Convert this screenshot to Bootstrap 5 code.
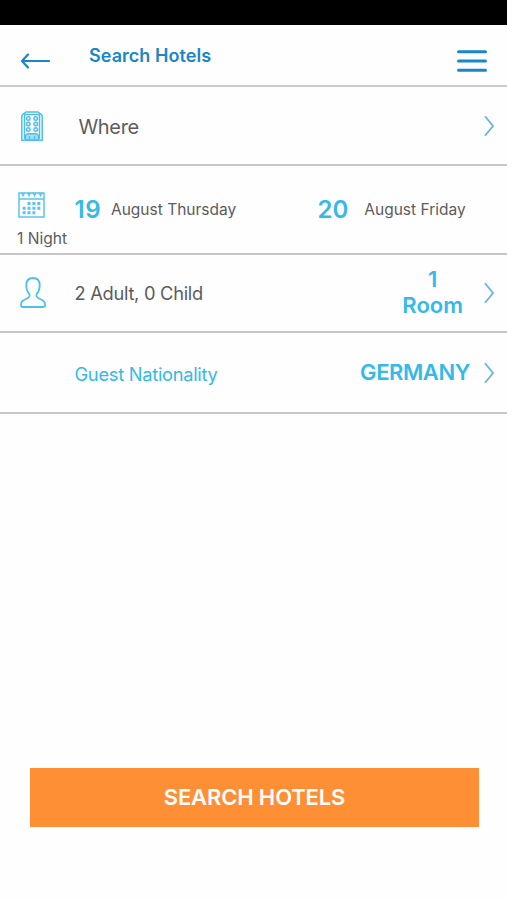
<!DOCTYPE html>
<html lang="en">
<head>
<meta charset="utf-8">
<meta name="viewport" content="width=device-width, initial-scale=1">
<title>Search Hotels</title>
<link href="https://cdn.jsdelivr.net/npm/bootstrap@5.3.0/dist/css/bootstrap.min.css" rel="stylesheet">
<style>
body{font-family:Inter,"Liberation Sans",sans-serif;color:#5c5c5c;background:#fefefe;line-height:1}
.screen{height:900px;overflow:hidden}
.statusbar{height:25px;background:#000}
.topbar{height:62px;border-bottom:2px solid #cbcbcb;padding:0 20px;color:#1a86c7}
.title{font-size:18px;font-weight:600;letter-spacing:.05px;margin-left:39px;padding-top:2px}
.line{border-bottom:2px solid #c6c6c6;padding:0 12px 0 17px}
.where{height:79px}
.dates{height:89px;display:grid;grid-template-columns:57.5px 243px 1fr;grid-template-rows:47px 17px;padding-top:18px;align-content:start}
.guests{height:78px}.nation{height:81px}
.slot{width:57.5px}
.sky{color:#35b9e9}
.big{font-size:20px;letter-spacing:-.35px;padding-top:2px}
.date{padding-top:4px}
.day{font-size:24px;font-weight:600}
.wide{letter-spacing:.5px}
.dt{font-size:15.500px}
.night{font-size:15.600px}
.mid{font-size:18.300px;letter-spacing:-.28px}
.strong{font-size:22px;line-height:26px;font-weight:600}
.country{letter-spacing:-.42px;padding-bottom:2px}
.cta{height:59px;background:#ff8f35;color:#fff;border:0;border-radius:0;font-size:22px;font-weight:600;letter-spacing:-.15px;margin:0 28px 73px 30px;padding:0}
svg{display:block;fill:none;flex:none}
</style>
<script src="https://cdn.jsdelivr.net/npm/bootstrap@5.3.0/dist/js/bootstrap.bundle.min.js" defer></script>
</head>
<body>
<main class="screen d-flex flex-column">
<div class="statusbar"></div>
<header class="topbar d-flex align-items-center">
<svg class="mt-2 pt-1" width="30" height="22" viewBox="0 0 30 18" stroke="currentColor" stroke-width="2.200" stroke-linecap="round" stroke-linejoin="round"><path d="M8 2.500 2 9 8 15.500M2.500 9H29"/></svg>
<h1 class="title mb-0">Search Hotels</h1>
<svg class="ms-auto mt-2 pt-1" width="30" height="28" viewBox="0 0 30 24" stroke="currentColor" stroke-width="3" stroke-linecap="round"><path d="M1.500 2.700H28.500M1.500 12H28.500M1.500 21.300H28.500"/></svg>
</header>
<section class="line where d-flex align-items-center">
<div class="slot"><svg class="ms-1" width="22" height="30" viewBox="0 0 22 30" stroke="#4dbfe9" stroke-width="1.500"><path d="M.8 29.200V5.500Q.8 3.500 2.500 3L5 .9H17L19.500 3Q21.200 3.500 21.200 5.500V29.200ZM3.500 28V4.800Q3.500 3.600 5 3.600H17Q18.500 3.600 18.500 4.800V28"/><path fill="#a6def4" d="M4.500 29V24.500L6.500 22.800H15.500L17.500 24.500V29Z"/><path d="M8.500 29V25M13.500 29V25"/><g stroke-width="1.400"><circle cx="7.300" cy="7.500" r="1.800"/><circle cx="14.700" cy="7.500" r="1.800"/><circle cx="7.300" cy="13" r="1.800"/><circle cx="14.700" cy="13" r="1.800"/><circle cx="7.300" cy="18.500" r="1.800"/><circle cx="14.700" cy="18.500" r="1.800"/></g></svg></div>
<span class="big ms-1">Where</span>
<svg class="ms-auto" width="12" height="22" viewBox="0 0 12 22" stroke="#69b2df" stroke-width="1.800"><path d="M2 1.200 10 11 2 20.800"/></svg>
</section>
<section class="line dates">
<svg style="margin-left:1px;margin-top:7px" width="27" height="28" viewBox="0 0 27 28" stroke="#5bc4ed" stroke-width="1.500"><path d="M1 2H26V26H1ZM1 8H26"/><path d="M3.500 1.500 5 4.500 6.500 1.500M9.500 1.500 11 4.500 12.500 1.500M15 1.500 16.500 4.500 18 1.500M21 1.500 22.500 4.500 24 1.500"/><path stroke-width="3" stroke-dasharray="3 1.900" d="M9.500 12.500H22.300M4.600 17.200H22.300M4.600 21.800H17.300"/></svg>
<div class="date d-flex align-items-center"><span class="day wide sky">19</span><span class="dt" style="margin-left:10px">August Thursday</span></div>
<div class="date d-flex align-items-center"><span class="day sky">20</span><span class="dt ms-3">August Friday</span></div>
<span class="night text-nowrap">1 Night</span>
</section>
<section class="line guests d-flex align-items-center">
<div class="slot"><svg style="margin:-2px 0 0 3px" width="26" height="31" viewBox="0 0 26 31" stroke="#4dc0ec" stroke-width="1.800" stroke-linejoin="round"><path d="M13 1C8.500 1 6.300 4 6.300 8.300C6.300 12 7.500 15 9.300 17C10.500 19.500 9.200 20.500 6.500 21.800C2.500 23.700 1 24.500 1 27.500V28.500Q1 30 2.500 30H23.500Q25 30 25 28.500V27.500C25 24.500 23.500 23.700 19.500 21.800C16.800 20.500 15.500 19.500 16.700 17C18.500 15 19.700 12 19.700 8.300C19.700 4 17.500 1 13 1Z"/></svg></div>
<span class="mid">2 Adult, 0 Child</span>
<span class="strong sky text-center ms-auto" style="padding-bottom:2px">1<br>Room</span>
<svg style="margin-left:20px" width="12" height="22" viewBox="0 0 12 22" stroke="#69b2df" stroke-width="1.800"><path d="M2 1.200 10 11 2 20.800"/></svg>
</section>
<section class="line nation d-flex align-items-center">
<div class="slot"></div>
<span class="mid sky" style="padding-top:3px">Guest Nationality</span>
<span class="strong country sky ms-auto">GERMANY</span>
<svg style="margin-left:13px" width="12" height="22" viewBox="0 0 12 22" stroke="#69b2df" stroke-width="1.800"><path d="M2 1.200 10 11 2 20.800"/></svg>
</section>
<button class="btn cta mt-auto" type="button">SEARCH HOTELS</button>
</main>
</body>
</html>
